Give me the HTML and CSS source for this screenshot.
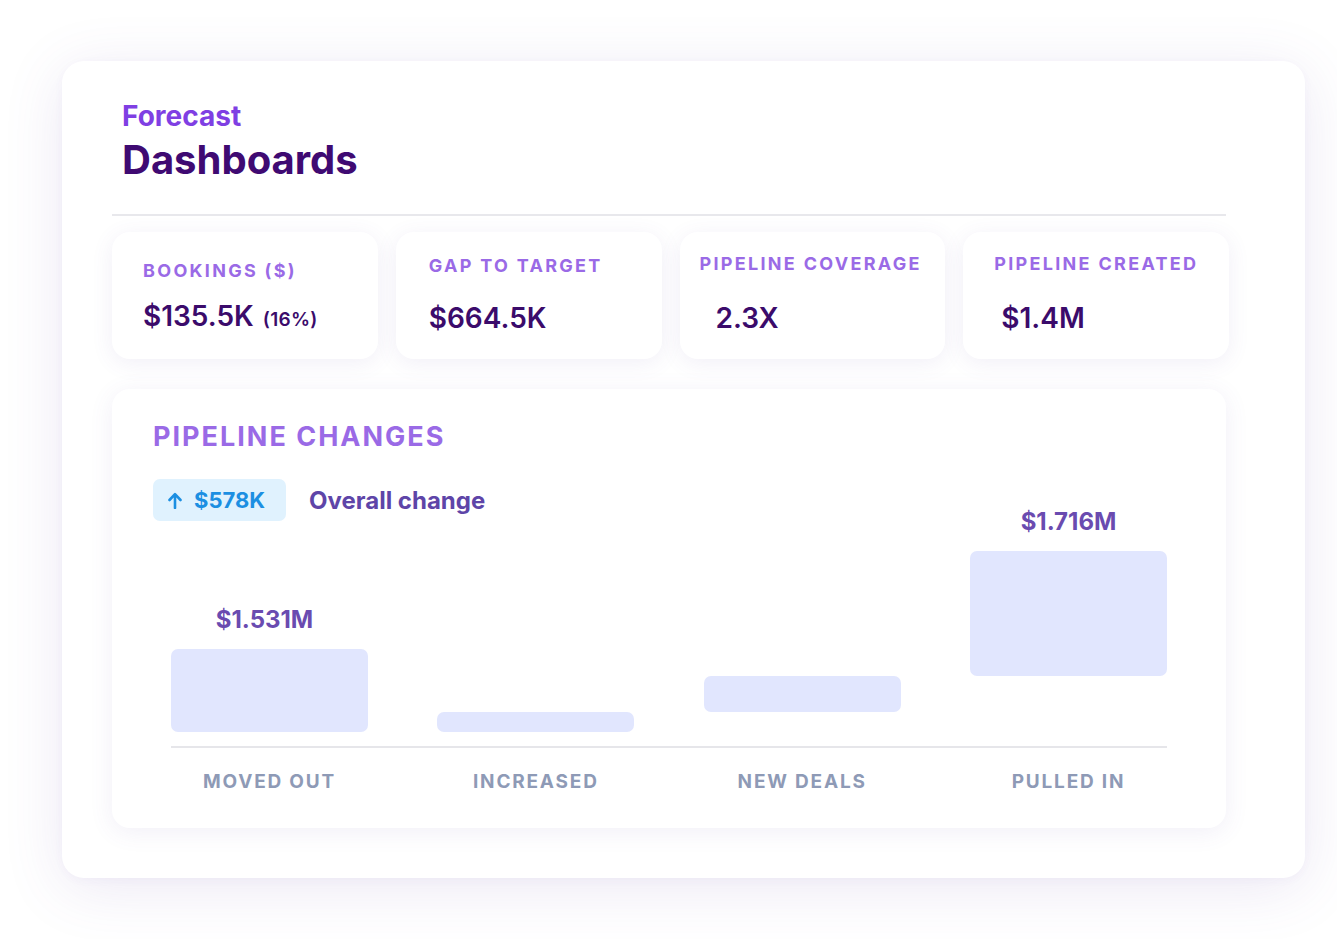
FILE: index.html
```html
<!DOCTYPE html>
<html lang="en">
<head>
<meta charset="utf-8">
<title>Forecast Dashboards</title>
<link rel="stylesheet" href="styles.css">
</head>
<body>
<div class="frame">
  <header class="head">
    <div class="eyebrow">Forecast</div>
    <h1 class="title">Dashboards</h1>
  </header>
  <div class="divider"></div>
  <section class="stats">
    <div class="stat stat--a">
      <div class="stat-label">BOOKINGS ($)</div>
      <div class="stat-value">$135.5K <span class="stat-sub">(16%)</span></div>
    </div>
    <div class="stat stat--b">
      <div class="stat-label">GAP TO TARGET</div>
      <div class="stat-value">$664.5K</div>
    </div>
    <div class="stat stat--c">
      <div class="stat-label">PIPELINE COVERAGE</div>
      <div class="stat-value">2.3X</div>
    </div>
    <div class="stat stat--d">
      <div class="stat-label">PIPELINE CREATED</div>
      <div class="stat-value">$1.4M</div>
    </div>
  </section>
  <section class="changes">
    <h2 class="changes-title">PIPELINE CHANGES</h2>
    <div class="summary">
      <div class="badge">
        <svg class="arrow" width="14" height="17" viewBox="0 0 14 17" aria-hidden="true">
          <path d="M7 16V2.5M1.5 8L7 2.2L12.5 8" fill="none" stroke="currentColor" stroke-width="2.6" stroke-linecap="round" stroke-linejoin="round"/>
        </svg>
        <span>$578K</span>
      </div>
      <span class="summary-text">Overall change</span>
    </div>
    <div class="chart">
      <div class="plot">
        <div class="col">
          <div class="bar-value bar-value--left">$1.531M</div>
          <div class="bar" style="height:83px"></div>
        </div>
        <div class="col">
          <div class="bar" style="height:20px"></div>
        </div>
        <div class="col" style="padding-bottom:20px">
          <div class="bar" style="height:36px"></div>
        </div>
        <div class="col" style="padding-bottom:56px">
          <div class="bar-value">$1.716M</div>
          <div class="bar" style="height:125px"></div>
        </div>
      </div>
      <div class="axis"></div>
      <div class="labels">
        <div class="label">MOVED OUT</div>
        <div class="label">INCREASED</div>
        <div class="label">NEW DEALS</div>
        <div class="label">PULLED IN</div>
      </div>
    </div>
  </section>
</div>
</body>
</html>
```
FILE: styles.css
```css
* { box-sizing: border-box; }
html, body { margin: 0; padding: 0; background: #ffffff; }
body {
  font-family: Inter, "Noto Sans", "Liberation Sans", sans-serif;
  width: 1337px;
  height: 939px;
  overflow: hidden;
}
.frame {
  margin: 61px 0 0 62px;
  width: 1243px;
  height: 817px;
  background: #ffffff;
  border-radius: 22px;
  box-shadow: 0 10px 60px rgba(110, 80, 170, 0.13), 0 2px 10px rgba(110, 80, 170, 0.04);
  padding: 40px 76px 0 50px;
}
.head { padding-left: 10px; }
.eyebrow {
  font-size: 28px;
  line-height: 30px;
  font-weight: 700;
  color: #7f3fe3;
}
.title {
  margin: 5px 0 0 0;
  font-size: 40px;
  line-height: 48px;
  font-weight: 700;
  color: #3f0a72;
}
.divider {
  margin: 30px 3px 0 0;
  height: 2px;
  background: #e8e8ec;
}
.stats {
  margin-top: 16px;
  display: grid;
  grid-template-columns: repeat(4, 1fr);
  column-gap: 18px;
}
.stat {
  height: 127px;
  background: #ffffff;
  border-radius: 18px;
  box-shadow: 0 4px 22px rgba(100, 80, 170, 0.09);
}
.stat-label {
  font-size: 18px;
  line-height: 22px;
  font-weight: 700;
  letter-spacing: 2.3px;
  color: #9a6ae6;
}
.stat-value {
  font-size: 28px;
  line-height: 32px;
  font-weight: 600;
  color: #3b0b6b;
}
.stat-sub { font-size: 19px; font-weight: 600; margin-left: 2px; letter-spacing: 0.3px; }
.stat--a { padding: 28px 0 0 31px; }
.stat--a .stat-value { margin-top: 18px; }
.stat--b { padding: 23px 0 0 33px; }
.stat--b .stat-value { margin-top: 25px; }
.stat--c { padding: 21px 0 0 20px; }
.stat--c .stat-value { margin: 27px 0 0 16px; }
.stat--d { padding: 21px 0 0 31px; }
.stat--d .stat-value { margin: 27px 0 0 7px; }

.changes {
  margin: 30px 3px 0 0;
  background: #ffffff;
  border-radius: 18px;
  box-shadow: 0 4px 24px rgba(100, 80, 170, 0.09);
  padding: 32px 0 34px 41px;
}
.changes-title {
  margin: 0;
  font-size: 27px;
  line-height: 32px;
  font-weight: 700;
  letter-spacing: 2px;
  color: #9a6ae6;
}
.summary {
  margin-top: 26px;
  display: flex;
  align-items: center;
  gap: 23px;
  height: 42px;
}
.badge {
  width: 133px;
  height: 42px;
  border-radius: 7px;
  background: #e0f2fe;
  color: #1c8fe2;
  display: flex;
  align-items: center;
  padding-left: 15px;
  font-size: 22px;
  font-weight: 700;
}
.arrow { margin-right: 12px; }
.summary-text {
  font-size: 24px;
  font-weight: 700;
  color: #5e45a8;
}
.chart {
  margin-top: -30px;
  margin-left: 18px;
  width: 996px;
}
.plot {
  height: 241px;
  display: flex;
  justify-content: space-between;
  align-items: flex-end;
}
.col {
  width: 197px;
  display: flex;
  flex-direction: column;
  align-items: stretch;
}
.bar {
  background: #e1e6fe;
  border-radius: 7px;
}
.bar-value {
  text-align: center;
  font-size: 24px;
  line-height: 28px;
  font-weight: 700;
  color: #6a4bb0;
  margin-bottom: 15px;
}
.bar-value--left { padding-right: 10px; }
.axis {
  margin-top: 14px;
  height: 2px;
  background: #e6e6ea;
}
.labels {
  margin-top: 22px;
  display: flex;
  justify-content: space-between;
}
.label {
  width: 197px;
  text-align: center;
  font-size: 19px;
  line-height: 24px;
  font-weight: 700;
  letter-spacing: 1.8px;
  color: #8e9ab6;
}
```
